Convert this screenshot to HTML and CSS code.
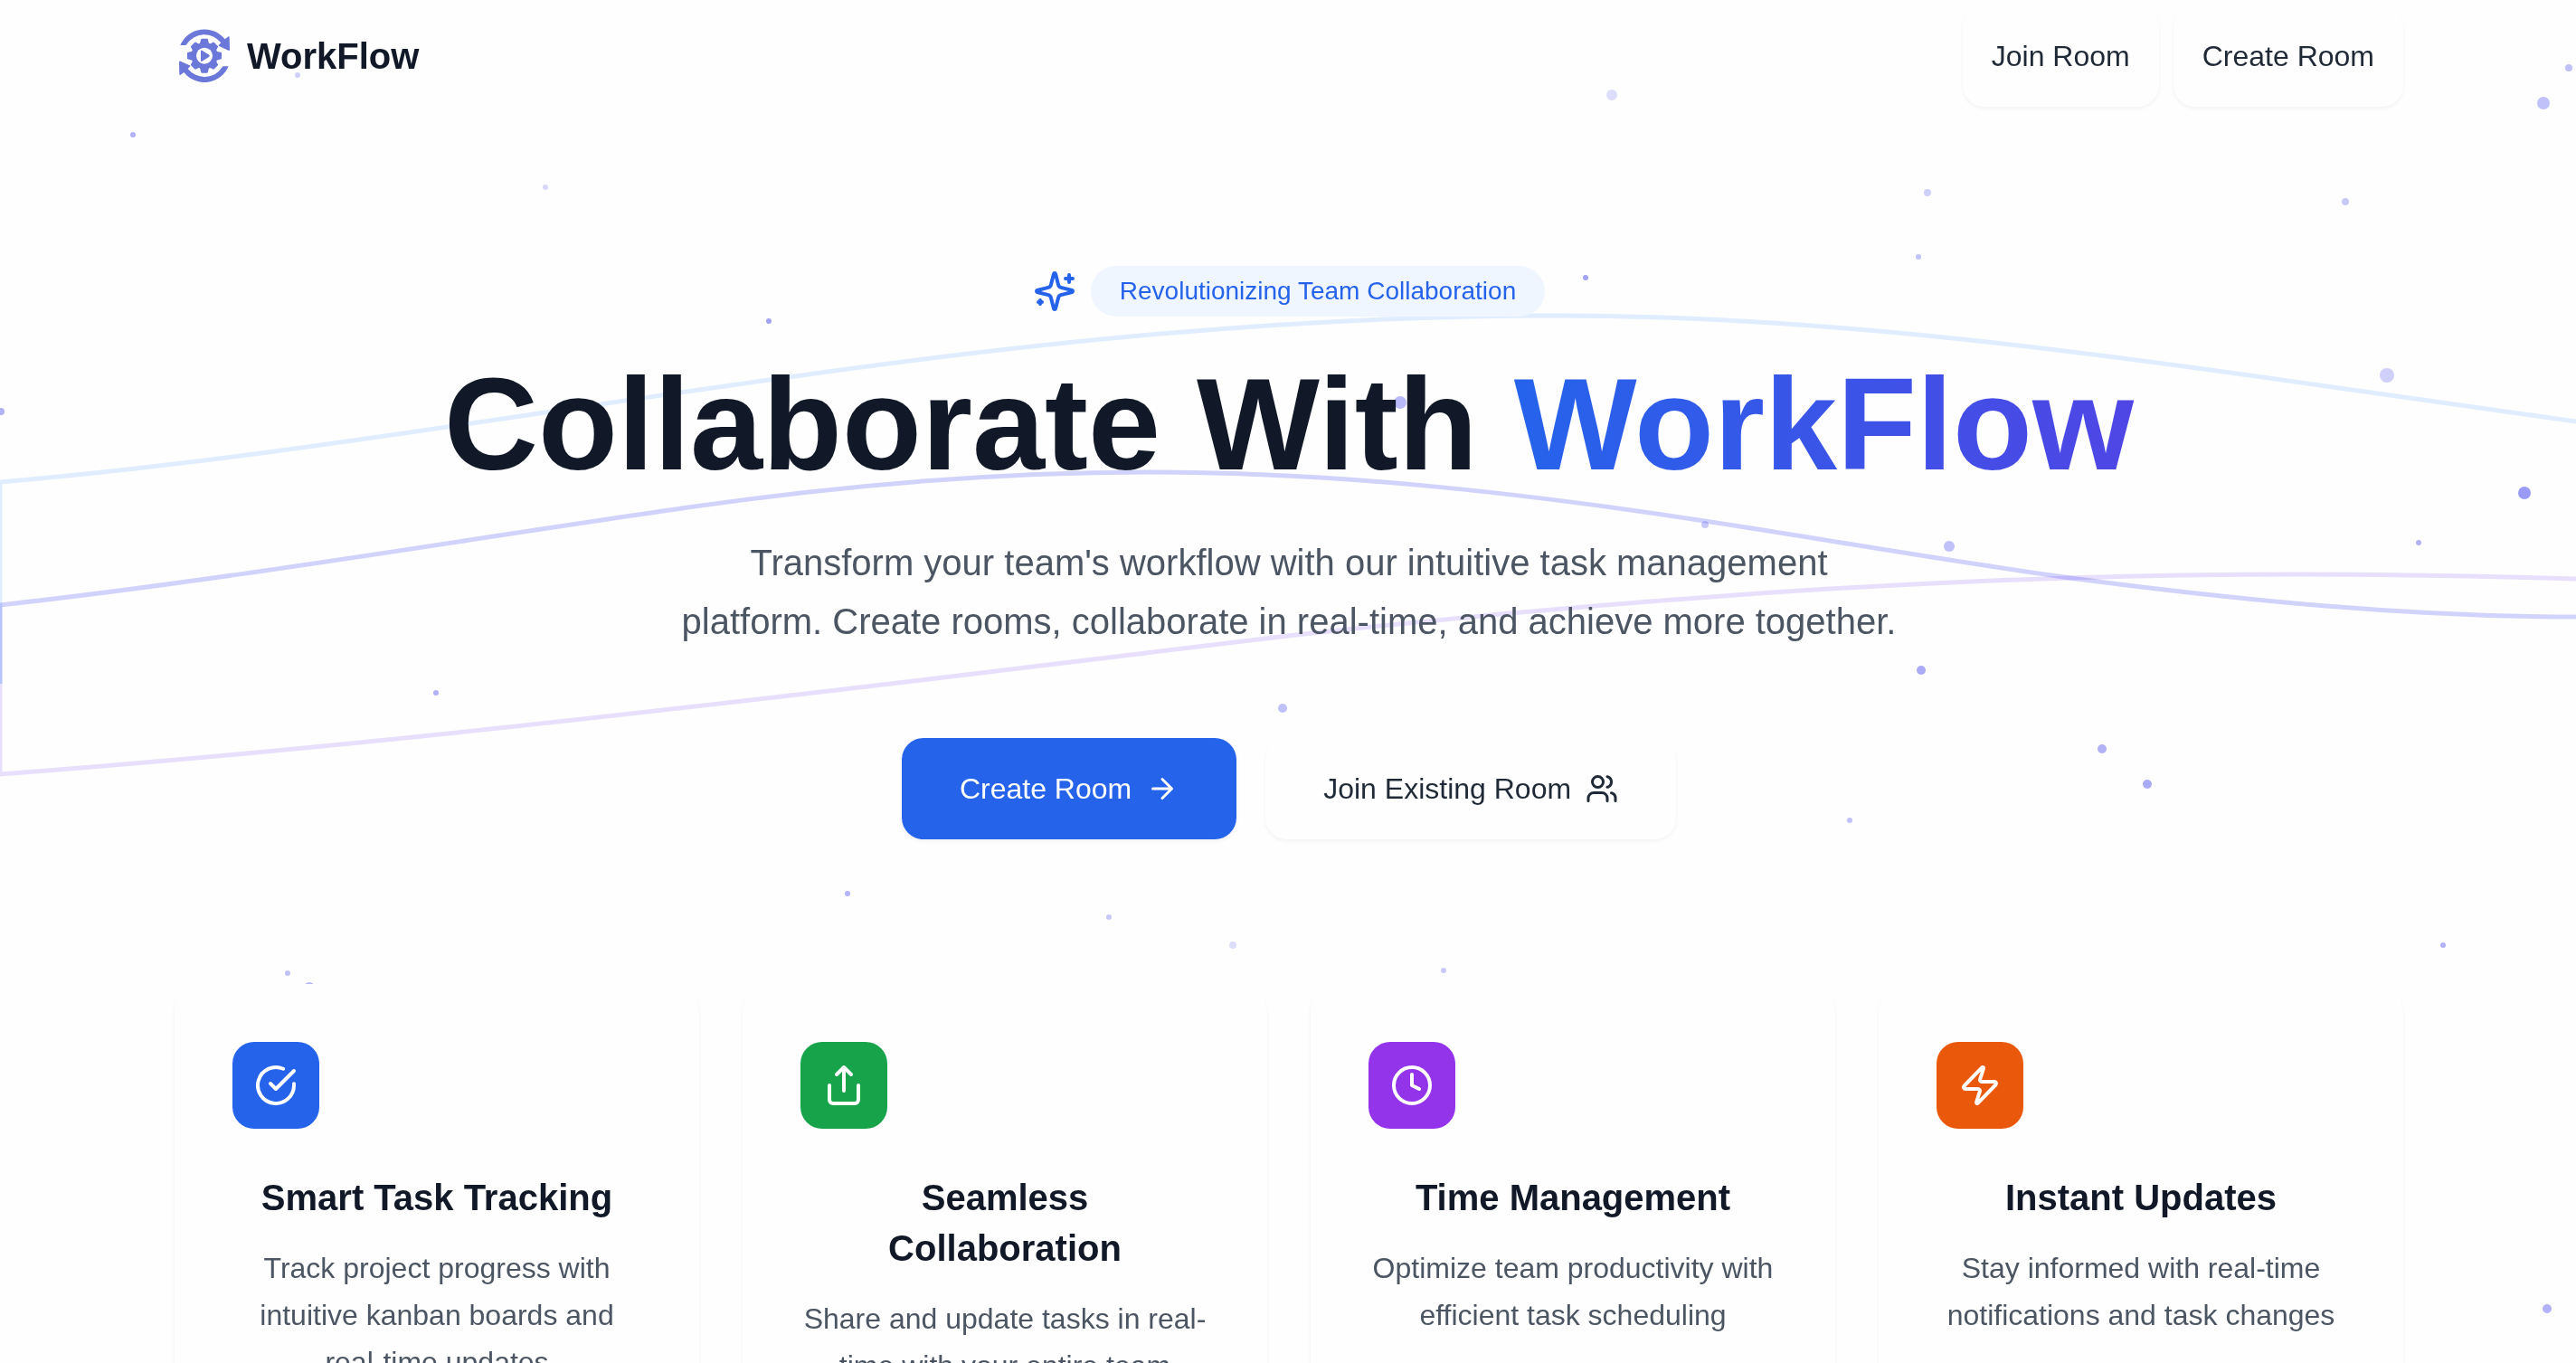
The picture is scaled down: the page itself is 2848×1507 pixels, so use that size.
FILE: index.html
```html
<!DOCTYPE html>
<html lang="en">
<head>
<meta charset="utf-8">
<meta name="viewport" content="width=device-width, initial-scale=1">
<title>WorkFlow</title>
<link rel="stylesheet" href="styles.css">
</head>
<body>
<svg class="backdrop" viewBox="0 0 2848 1507" preserveAspectRatio="xMidYMid slice" aria-hidden="true">
  <g class="waves">
    <path class="wave-blue" d="M0 756V533C291 508 581 457 872 417C1155 377 1437 349 1720 349C1976 349 2231 379 2487 415C2607 432 2728 449 2848 466"/>
    <path class="wave-violet" d="M0 756V856C345 830 690 791 1035 750C1165 735 1294 718 1424 703C1575 686 1727 672 1878 661C2099 644 2320 635 2541 635C2643 635 2746 637 2848 640"/>
    <path class="wave-indigo" d="M0 756V669C251 641 503 598 754 562C926 537 1098 522 1270 522C1473 522 1675 544 1878 575C2017 596 2157 621 2296 640C2480 664 2664 682 2848 682"/>
  </g>
  <g class="dots">
    <circle cx="147" cy="149" r="3" opacity=".5"/>
    <circle cx="603" cy="207" r="3" opacity=".25"/>
    <circle cx="329" cy="83" r="3" opacity=".3"/>
    <circle cx="850" cy="355" r="3" opacity=".6"/>
    <circle cx="1" cy="455" r="4" opacity=".5"/>
    <circle cx="1782" cy="105" r="6" opacity=".22"/>
    <circle cx="2131" cy="213" r="4" opacity=".3"/>
    <circle cx="2121" cy="284" r="3" opacity=".4"/>
    <circle cx="1753" cy="307" r="3" opacity=".6"/>
    <circle cx="2593" cy="223" r="4" opacity=".35"/>
    <circle cx="2812" cy="114" r="7" opacity=".4"/>
    <circle cx="2840" cy="75" r="4" opacity=".4"/>
    <circle cx="2639" cy="415" r="8" opacity=".3"/>
    <circle cx="1548" cy="445" r="7" opacity=".45"/>
    <circle cx="2791" cy="545" r="7" opacity=".65"/>
    <circle cx="1885" cy="580" r="4" opacity=".35"/>
    <circle cx="2155" cy="604" r="6" opacity=".4"/>
    <circle cx="2674" cy="600" r="3" opacity=".5"/>
    <circle cx="2124" cy="741" r="5" opacity=".55"/>
    <circle cx="1418" cy="783" r="5" opacity=".4"/>
    <circle cx="2324" cy="828" r="5" opacity=".5"/>
    <circle cx="2374" cy="867" r="5" opacity=".55"/>
    <circle cx="2045" cy="907" r="3" opacity=".4"/>
    <circle cx="937" cy="988" r="3" opacity=".5"/>
    <circle cx="1226" cy="1014" r="3" opacity=".35"/>
    <circle cx="1363" cy="1045" r="4" opacity=".22"/>
    <circle cx="1596" cy="1073" r="3" opacity=".35"/>
    <circle cx="2701" cy="1045" r="3" opacity=".5"/>
    <circle cx="318" cy="1076" r="3" opacity=".4"/>
    <circle cx="342" cy="1092" r="6" opacity=".45"/>
    <circle cx="482" cy="766" r="3" opacity=".5"/>
    <circle cx="2816" cy="1447" r="5" opacity=".5"/>
  </g>
</svg>

<div class="page">
  <header class="topbar">
    <a class="brand" href="#">
      <svg class="brand-mark" viewBox="0 0 192 192" aria-hidden="true">
        <defs>
          <path id="swoosh" d="M-80-35A87 87 0 0 1 68-55L80-64Q83-65 83-61L84-21Q84-16 79-18L49-32Q45-34 49-37L55-43A70 70 0 0 0-59-38Q-60-35-63-35Z"/>
          <path id="tooth" d="M-15-40L-11-56Q-10-57-8-57H8Q10-57 11-56L15-40Z"/>
          <path id="tooth-short" d="M-15-40L-11-53Q-10-54-8-54H8Q10-54 11-53L15-40Z"/>
        </defs>
        <g transform="translate(99 95)" fill="#6b78d9">
          <use href="#swoosh"/>
          <use href="#swoosh" transform="rotate(180)"/>
          <use href="#tooth"/>
          <use href="#tooth-short" transform="rotate(45)"/>
          <use href="#tooth" transform="rotate(90)"/>
          <use href="#tooth-short" transform="rotate(135)"/>
          <use href="#tooth" transform="rotate(180)"/>
          <use href="#tooth-short" transform="rotate(225)"/>
          <use href="#tooth" transform="rotate(270)"/>
          <use href="#tooth-short" transform="rotate(315)"/>
          <circle r="44"/>
          <circle r="27" fill="#fff"/>
          <path d="M-12-16Q-12-20-8-18L16-3Q19 0 16 3L-8 18Q-12 20-12 16Z"/>
        </g>
      </svg>
      <span>WorkFlow</span>
    </a>
    <nav class="topbar-actions">
      <button class="btn btn-plain btn-compact" type="button">Join Room</button>
      <button class="btn btn-plain btn-compact" type="button">Create Room</button>
    </nav>
  </header>

  <main>
    <section class="hero">
      <div class="tagline">
        <svg class="icon icon-lg" viewBox="0 0 24 24" aria-hidden="true"><path d="M9.937 15.5A2 2 0 0 0 8.5 14.063l-6.135-1.582a.5.5 0 0 1 0-.962L8.5 9.936A2 2 0 0 0 9.937 8.5l1.582-6.135a.5.5 0 0 1 .963 0L14.063 8.5A2 2 0 0 0 15.5 9.937l6.135 1.581a.5.5 0 0 1 0 .964L15.5 14.063a2 2 0 0 0-1.437 1.437l-1.582 6.135a.5.5 0 0 1-.963 0z"/><path d="M20 3v4M22 5h-4M4 17v2M5 18H3"/></svg>
        <span class="pill">Revolutionizing Team Collaboration</span>
      </div>
      <h1>Collaborate With <span class="accent">WorkFlow</span></h1>
      <p class="lead">Transform your team's workflow with our intuitive task management platform. Create rooms, collaborate in real-time, and achieve more together.</p>
      <div class="hero-actions">
        <button class="btn btn-primary" type="button">Create Room
          <svg class="icon icon-sm" viewBox="0 0 24 24" aria-hidden="true"><path d="M5 12h14M12 5l7 7-7 7"/></svg>
        </button>
        <button class="btn btn-plain" type="button">Join Existing Room
          <svg class="icon icon-sm" viewBox="0 0 24 24" aria-hidden="true"><path d="M16 21v-2a4 4 0 0 0-4-4H6a4 4 0 0 0-4 4v2"/><circle cx="9" cy="7" r="4"/><path d="M22 21v-2a4 4 0 0 0-3-3.87M16 3.13a4 4 0 0 1 0 7.75"/></svg>
        </button>
      </div>
    </section>

    <section class="features">
      <article class="card">
        <div class="tile tile-blue"><svg class="icon icon-lg" viewBox="0 0 24 24" aria-hidden="true"><path d="M22 11.08V12a10 10 0 1 1-5.93-9.14"/><path d="m9 11 3 3L22 4"/></svg></div>
        <h2>Smart Task Tracking</h2>
        <p>Track project progress with intuitive kanban boards and real-time updates</p>
      </article>
      <article class="card">
        <div class="tile tile-green"><svg class="icon icon-lg" viewBox="0 0 24 24" aria-hidden="true"><path d="M4 12v8a2 2 0 0 0 2 2h12a2 2 0 0 0 2-2v-8M16 6l-4-4-4 4M12 2v13"/></svg></div>
        <h2>Seamless Collaboration</h2>
        <p>Share and update tasks in real-time with your entire team</p>
      </article>
      <article class="card">
        <div class="tile tile-purple"><svg class="icon icon-lg" viewBox="0 0 24 24" aria-hidden="true"><circle cx="12" cy="12" r="10"/><path d="M12 6v6l4 2"/></svg></div>
        <h2>Time Management</h2>
        <p>Optimize team productivity with efficient task scheduling</p>
      </article>
      <article class="card">
        <div class="tile tile-orange"><svg class="icon icon-lg" viewBox="0 0 24 24" aria-hidden="true"><path d="M4 14a1 1 0 0 1-.78-1.63l9.9-10.2a.5.5 0 0 1 .86.46l-1.92 6.02A1 1 0 0 0 13 10h7a1 1 0 0 1 .78 1.63l-9.9 10.2a.5.5 0 0 1-.86-.46l1.92-6.02A1 1 0 0 0 11 14z"/></svg></div>
        <h2>Instant Updates</h2>
        <p>Stay informed with real-time notifications and task changes</p>
      </article>
    </section>
  </main>
</div>
</body>
</html>
```
FILE: styles.css
```css
* {
  box-sizing: border-box;
}

body {
  margin: 0;
  background: #fefefe;
  color: #111827;
  font-family: "Liberation Sans", Arial, sans-serif;
  font-size: 32px;
}

h1, h2, p {
  margin: 0;
}

/* Decorative waves and particles behind the page */
.backdrop {
  position: fixed;
  inset: 0;
  z-index: -1;
  width: 100%;
  height: 100vh;
}

.waves {
  fill: none;
  stroke-width: 5;
}

.waves path {
  mix-blend-mode: multiply;
}

.wave-blue { stroke: #dfedff; }
.wave-indigo { stroke: #d2d3fc; }
.wave-violet { stroke: #e8dffd; }

.dots {
  fill: #6366f1;
}

.page {
  max-width: 2560px;
  margin: 0 auto;
  padding: 0 47px 96px 49px;
}

.topbar {
  display: flex;
  align-items: center;
  justify-content: space-between;
  padding: 6px 0;
}

.brand {
  display: flex;
  align-items: center;
  gap: 16px;
  color: inherit;
  font-size: 40px;
  font-weight: 700;
  line-height: 56px;
  text-decoration: none;
}

.brand-mark {
  width: 64px;
  height: 64px;
}

.topbar-actions {
  display: flex;
  gap: 16px;
}

.btn {
  display: inline-flex;
  align-items: center;
  gap: 16px;
  height: 112px;
  padding: 0 64px;
  border: 0;
  border-radius: 24px;
  box-shadow: 0 2px 4px rgba(0, 0, 0, 0.05);
  font: inherit;
  line-height: 48px;
  cursor: pointer;
}

.btn-compact {
  padding: 0 32px;
}

.btn-primary {
  background: #2563eb;
  color: #fff;
}

.btn-plain {
  background: #fefefe;
  color: #1f2937;
}

.icon {
  flex: none;
  fill: none;
  stroke: currentColor;
  stroke-width: 2;
  stroke-linecap: round;
  stroke-linejoin: round;
}

.icon-sm {
  width: 36px;
  height: 36px;
}

.icon-lg {
  width: 48px;
  height: 48px;
}

.hero {
  display: flex;
  flex-direction: column;
  align-items: center;
  padding: 170px 0 160px;
  text-align: center;
}

.tagline {
  display: flex;
  align-items: center;
  gap: 16px;
  margin-bottom: 48px;
  color: #2563eb;
}

.pill {
  padding: 8px 32px;
  border-radius: 28px;
  background: #eff6ff;
  font-size: 28px;
  line-height: 40px;
}

h1 {
  margin-bottom: 48px;
  font-size: 144px;
  line-height: 144px;
}

.accent {
  background: linear-gradient(to right, #2563eb, #4f46e5);
  background-clip: text;
  -webkit-background-clip: text;
  color: transparent;
}

.lead {
  max-width: 1344px;
  margin-bottom: 96px;
  color: #4b5563;
  font-size: 40px;
  line-height: 65px;
}

.hero-actions {
  display: flex;
  gap: 32px;
}

.features {
  display: grid;
  grid-template-columns: repeat(4, 1fr);
  gap: 48px;
}

.card {
  padding: 64px;
  border-radius: 32px;
  background: #fefefe;
  box-shadow: 0 2px 4px rgba(0, 0, 0, 0.05);
  text-align: center;
}

.tile {
  display: flex;
  align-items: center;
  justify-content: center;
  width: 96px;
  height: 96px;
  margin-bottom: 48px;
  border-radius: 24px;
  color: #fff;
}

.tile-blue { background: #2563eb; }
.tile-green { background: #16a34a; }
.tile-purple { background: #9333ea; }
.tile-orange { background: #ea580c; }

.card h2 {
  margin-bottom: 24px;
  font-size: 40px;
  line-height: 56px;
}

.card p {
  color: #4b5563;
  line-height: 52px;
}
```
